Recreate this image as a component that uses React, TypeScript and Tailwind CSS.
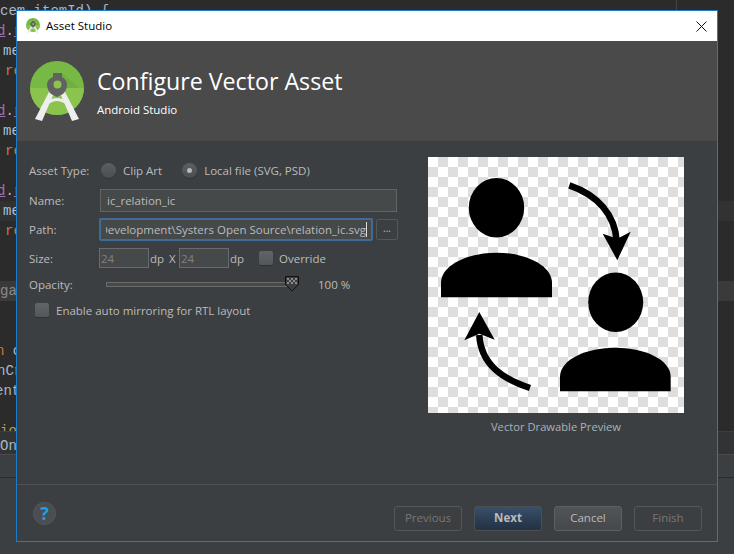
const ui = { fontFamily: '"Open Sans", "Noto Sans", sans-serif' };

function StudioLogo({ className }: { className: string }) {
  return (
    <svg viewBox="0 0 60 66" className={className}>
      <circle cx="30" cy="27" r="27" fill="#78b845" />
      <path d="M3 27a27 27 0 0 0 54 0Z" fill="#8bc34f" />
      <path d="M35 12L52 27H35Z" fill="#6aa63e" opacity="0.6" />
      <path d="M23 29l4 3-12 28-7-2ZM37 29l-4 3 12 28 7-2Z" fill="#eeeeee" />
      <path d="M15 47Q30 30 45 47" fill="none" stroke="#eeeeee" strokeWidth="3" />
      <path d="M26 12h9v4c3 2 5 4 5 8 0 3-2 7-4 9l-6 3-6-3c-2-2-4-6-4-9 0-4 2-6 6-8Z" fill="#616161" />
      <circle cx="30.5" cy="23.5" r="4" fill="#8bc34f" />
    </svg>
  );
}

function Row({ children }: { children?: React.ReactNode }) {
  return <div className="h-5 leading-5 whitespace-pre">{children}</div>;
}

function Editor() {
  const call = (
    <span className="ml-[-3px]">
      <span className="text-[#9876aa] underline">d</span>
      <span className="text-[#a9b7c6]">.</span>
      <span className="text-[#9876aa] underline">r</span>
    </span>
  );
  const me = <span className="ml-[3px] text-[#a9c1d9]">me</span>;
  const re = <span className="ml-[5px] text-[#cc7832]">re</span>;
  return (
    <div
      className="absolute inset-x-0 top-px h-[430px] overflow-hidden text-[14px] text-[#a9b7c6]"
      style={{ fontFamily: '"Liberation Mono", monospace' }}
    >
      <Row>cem.itemId) &#123;</Row>
      <Row>{call}</Row>
      <Row>{me}</Row>
      <Row>{re}</Row>
      <Row />
      <Row>{call}</Row>
      <Row>{me}</Row>
      <Row>{re}</Row>
      <Row />
      <Row>{call}</Row>
      <div className="h-5 leading-5 whitespace-pre bg-[#323232]">{me}</div>
      <Row>{re}</Row>
      <Row />
      <Row />
      <div className="h-5 leading-5 whitespace-pre bg-[#3a3a3a] text-[#8a8a8a]">gat</div>
      <Row />
      <Row />
      <Row>
        <span className="ml-[-4px] text-[#cc7832]">n</span> c
      </Row>
      <Row>
        <span className="ml-[-3px]">nCr</span>
      </Row>
      <Row>
        <span className="ml-[-5px]">ent</span>
      </Row>
      <Row />
      <div className="h-5 leading-5 whitespace-pre text-[#b89a5a]">ior</div>
    </div>
  );
}

function Radio({ checked }: { checked?: boolean }) {
  return (
    <span className="flex h-[15px] w-[15px] items-center justify-center rounded-full bg-gradient-to-b from-[#5b5f61] to-[#4b4e50] shadow-[0_1px_0_#2f3234]">
      {checked && <span className="h-[5px] w-[5px] rounded-full bg-[#b8b8b8]" />}
    </span>
  );
}

function Check() {
  return (
    <span className="block h-[14px] w-[14px] rounded-[2px] bg-gradient-to-b from-[#626567] to-[#54575a] shadow-[0_1px_0_#2f3234]" />
  );
}

function Field({ label, children }: { label: string; children: React.ReactNode }) {
  return (
    <div className="flex items-center">
      <span className="w-[70px] shrink-0">{label}</span>
      {children}
    </div>
  );
}

function Preview() {
  return (
    <svg viewBox="0 0 256 256" className="h-full w-full">
      <ellipse cx="68.5" cy="50.7" rx="27.7" ry="29.7" />
      <path d="M13 140.3V126C13 108 40 95.7 68.5 95.7S124 108 124 126V140.3Z" />
      <ellipse cx="187.7" cy="145.3" rx="27.5" ry="29.7" />
      <path d="M132 234.3V220C132 202 159 190.7 187.3 190.7S242.7 202 242.7 220V234.3Z" />
      <path d="M141.3 28.3C170 38 187 58 188.7 84" fill="none" stroke="#000" strokeWidth="6.5" />
      <path d="M189.3 103.3L174.7 76.7 189.3 81.7 202.7 74.7Z" />
      <path d="M102 231C75 222 53 208 51.3 178" fill="none" stroke="#000" strokeWidth="6.5" />
      <path d="M51.3 155L36.3 183.3 51.3 176.7 66.7 182.7Z" />
    </svg>
  );
}

function FooterButton({ label, kind }: { label: string; kind: 'off' | 'main' | 'on' }) {
  const look =
    kind === 'main'
      ? 'bg-gradient-to-b from-[#384f6b] to-[#233143] border-[#4c5052] text-[#bbbbbb] font-bold'
      : kind === 'on'
        ? 'bg-gradient-to-b from-[#505456] to-[#46494b] border-[#5e6060] text-[#bbbbbb]'
        : 'border-[#555759] text-[#777777]';
  return (
    <div className={`flex h-[25px] w-[68px] items-center justify-center rounded-[3px] border text-[11.5px] ${look}`}>
      {label}
    </div>
  );
}

export default function App() {
  return (
    <div className="relative h-[554px] w-[734px] overflow-hidden bg-[#2b2b2b]" style={ui}>
      <Editor />
      <div className="absolute left-[676px] top-0 h-[10px] w-px bg-[#444444]" />
      <div className="absolute inset-x-0 top-[431px] h-[23px] border-t border-[#3c3f41] bg-[#313335] text-[14px] leading-[26px] text-[#a9b7c6]">
        <span style={{ fontFamily: '"Liberation Mono", monospace' }}>On</span>
      </div>
      <div className="absolute inset-x-0 top-[454px] bottom-0 border-t border-[#4a4c4e] bg-[#3c3f41]">
        <div className="mt-[22px] h-px bg-[#2b2b2b]" />
      </div>

      {/* dialog */}
      <div className="absolute left-4 top-[10px] flex h-[532px] w-[702px] flex-col border border-[#1b7dcc] bg-[#3c3f41] text-[11.5px] text-[#bbbbbb]">
        <div className="flex h-[30px] shrink-0 items-center bg-white pl-2 pr-[9px] text-black">
          <StudioLogo className="h-[17px] w-4" />
          <span className="ml-[5px] flex-1">Asset Studio</span>
          <svg width="11" height="11" viewBox="0 0 11 11" className="mr-[1px]">
            <path d="M0.5 0.5l10 10M10.5 0.5l-10 10" stroke="#111" strokeWidth="1" fill="none" />
          </svg>
        </div>

        <div className="flex h-[100px] shrink-0 bg-[#4a4a4a] pl-[10px] pt-5">
          <StudioLogo className="h-[66px] w-[60px] shrink-0" />
          <div className="ml-[10px] text-white">
            <div className="mt-[2px] text-[23.2px] leading-[36px]">Configure Vector Asset</div>
            <div className="mt-[3px] text-[11.5px] leading-[16px]">Android Studio</div>
          </div>
        </div>

        <div className="flex min-h-0 flex-1">
          <div className="w-[411px] shrink-0 pl-3 pt-[21px]">
            <Field label="Asset Type:">
              <span className="ml-[2px] flex items-center gap-[7px]">
                <Radio />
                Clip Art
              </span>
              <span className="ml-5 flex items-center gap-[7px]">
                <Radio checked />
                Local file (SVG, PSD)
              </span>
            </Field>
            <div className="mt-[10px]">
              <Field label="Name:">
                <div className="ml-[1px] flex h-[23px] w-[297px] items-center border border-[#646464] bg-[#45494a] px-[6px]">
                  ic_relation_ic
                </div>
              </Field>
            </div>
            <div className="mt-[6px]">
              <Field label="Path:">
                <div className="flex h-[23px] w-[274px] items-center overflow-hidden rounded-[2px] border-2 border-[#3f6b97] bg-[#45494a] pl-[5px] pr-[4px] whitespace-nowrap">
                  <div className="flex min-w-0 flex-1 items-center justify-end overflow-hidden">
                    <span>Development\Systers Open Source\relation_ic.svg</span>
                    <span className="h-[15px] w-px shrink-0 bg-[#dddddd]" />
                  </div>
                </div>
                <div className="ml-[3px] flex h-[21px] w-[22px] items-center justify-center rounded-[2px] border border-[#555759] pb-[3px] text-[10px]">
                  ...
                </div>
              </Field>
            </div>
            <div className="mt-[7px]">
              <Field label="Size:">
                <div className="flex h-5 w-[50px] items-center border border-[#6a6a6a] bg-[#45494a] pl-[1px] text-[#808080]">24</div>
                <span className="ml-[1px] w-[19px]">dp</span>
                <span className="w-[10px]">X</span>
                <div className="flex h-5 w-[50px] items-center border border-[#6a6a6a] bg-[#45494a] pl-[1px] text-[#808080]">24</div>
                <span className="ml-[1px] w-[29px]">dp</span>
                <Check />
                <span className="ml-[6px]">Override</span>
              </Field>
            </div>
            <div className="mt-2">
              <Field label="Opacity:">
                <div className="relative ml-[7px] h-[5px] w-[185px] border border-[#6a6a6a] bg-[#45494a]">
                  <svg width="14" height="16" viewBox="0 0 14 16" className="absolute right-[-9px] top-[-7px]">
                    <path d="M0.5 0.5H13.5V8.5L7 15 0.5 8.5Z" fill="#3c3f41" stroke="#111" />
                    <path d="M2 2h2v2H2zM6 2h2v2H6zM10 2h2v2h-2zM4 4h2v2H4zM8 4h2v2H8zM2 6h2v2H2zM6 6h2v2H6zM10 6h2v2h-2z" fill="#8a8a8a" />
                  </svg>
                </div>
                <span className="ml-[27px]">100 %</span>
              </Field>
            </div>
            <div className="mt-2 flex items-center pl-[6px]">
              <Check />
              <span className="ml-[7px]">Enable auto mirroring for RTL layout</span>
            </div>
          </div>

          <div className="pt-4">
            <div className="h-[256px] w-[256px] bg-[conic-gradient(#dedede_25%,#ffffff_0_50%,#dedede_0_75%,#ffffff_0)] bg-[length:20px_20px]">
              <Preview />
            </div>
            <div className="mt-[6px] text-center text-[11.2px] text-[#a9b2bb]">Vector Drawable Preview</div>
          </div>
        </div>

        <div className="flex h-[57px] shrink-0 items-center justify-between border-t border-[#515151] pl-4 pr-[15px]">
          <div className="flex h-[23px] w-[23px] items-center justify-center rounded-full border border-[#54585a] bg-[#4a4e50] text-[18px] font-bold text-[#1e9fe6]">
            ?
          </div>
          <div className="mt-[10px] flex gap-3">
            <FooterButton label="Previous" kind="off" />
            <FooterButton label="Next" kind="main" />
            <FooterButton label="Cancel" kind="on" />
            <FooterButton label="Finish" kind="off" />
          </div>
        </div>
      </div>
    </div>
  );
}
